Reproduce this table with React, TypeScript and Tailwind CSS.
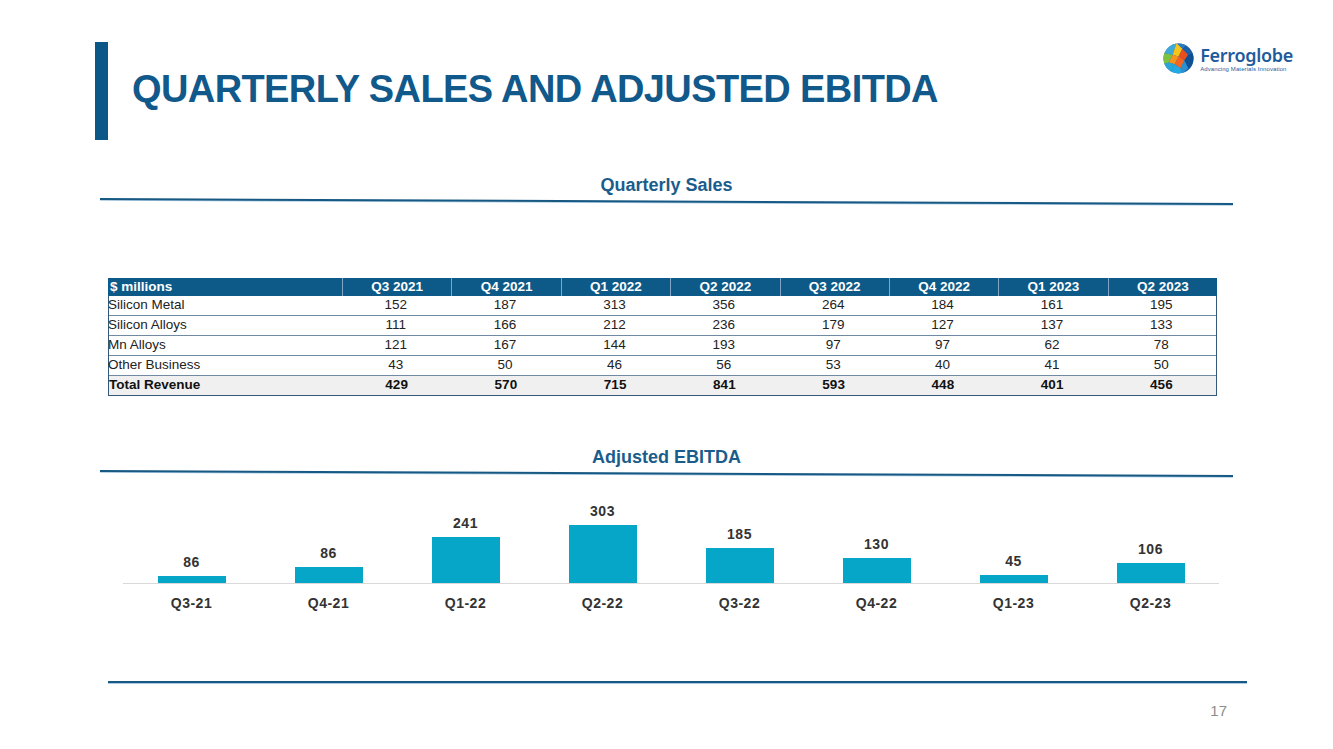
import React from "react";

const quarters = ["Q3 2021", "Q4 2021", "Q1 2022", "Q2 2022", "Q3 2022", "Q4 2022", "Q1 2023", "Q2 2023"];

const rows = [
  { label: "Silicon Metal", values: [152, 187, 313, 356, 264, 184, 161, 195] },
  { label: "Silicon Alloys", values: [111, 166, 212, 236, 179, 127, 137, 133] },
  { label: "Mn Alloys", values: [121, 167, 144, 193, 97, 97, 62, 78] },
  { label: "Other Business", values: [43, 50, 46, 56, 53, 40, 41, 50] },
];

const totals = [429, 570, 715, 841, 593, 448, 401, 456];

// bar heights measured off the slide, not scaled from the values
const ebitda = [
  { q: "Q3-21", v: 86, h: 7 },
  { q: "Q4-21", v: 86, h: 16 },
  { q: "Q1-22", v: 241, h: 46 },
  { q: "Q2-22", v: 303, h: 58 },
  { q: "Q3-22", v: 185, h: 35 },
  { q: "Q4-22", v: 130, h: 25 },
  { q: "Q1-23", v: 45, h: 8 },
  { q: "Q2-23", v: 106, h: 20 },
];

function Logo() {
  return (
    <div className="flex items-center gap-[6px]">
      <svg width="31" height="31" viewBox="0 0 32 32">
        <defs>
          <clipPath id="globe">
            <circle cx="16" cy="16" r="15.5" />
          </clipPath>
        </defs>
        <g clipPath="url(#globe)">
          <rect x="0" y="0" width="32" height="32" fill="#1f6fb5" />
          <polygon points="0,0 14,0 10,12 0,10" fill="#3fa9d8" />
          <polygon points="0,10 10,12 6,20 0,22" fill="#7cc142" />
          <polygon points="10,12 14,0 20,6 16,14" fill="#f5c518" />
          <polygon points="6,20 10,12 16,14 12,22" fill="#f7941d" />
          <polygon points="16,14 20,6 26,12 22,18" fill="#e94e1b" />
          <polygon points="12,22 16,14 22,18 18,26" fill="#f26522" />
          <polygon points="0,22 6,20 12,22 8,32 0,32" fill="#2aa6d6" />
          <polygon points="8,32 12,22 18,26 20,32" fill="#25a9e0" />
          <polygon points="20,6 26,0 32,0 32,10 26,12" fill="#1b5fa8" />
          <polygon points="22,18 26,12 32,10 32,24 26,26" fill="#0f4f94" />
          <polygon points="18,26 22,18 26,26 20,32" fill="#2d8fd0" />
          <polygon points="26,26 32,24 32,32 20,32" fill="#155ca0" />
          <polygon points="14,0 26,0 20,6" fill="#2a7cc2" />
        </g>
      </svg>
      <div className="flex flex-col">
        <span className="text-[18px] leading-[20px] font-semibold text-[#1f5b9c] font-['Noto_Sans',sans-serif] tracking-[-0.3px]">
          Ferroglobe
        </span>
        <span className="text-[6px] leading-[8px] text-[#1f5b9c] font-['Liberation_Sans',sans-serif] tracking-[0.1px]">
          Advancing Materials Innovation
        </span>
      </div>
    </div>
  );
}

function SlantRule({ top, bottom }: { top: number; bottom: number }) {
  return (
    <svg width="1333" height="10" viewBox="0 0 1333 10" className="block">
      <line x1="100" y1={top + 1} x2="1233" y2={bottom + 1} stroke="#a9cbe3" strokeWidth="1.5" />
      <line x1="100" y1={top} x2="1233" y2={bottom} stroke="#175983" strokeWidth="2" />
    </svg>
  );
}

export default function App() {
  return (
    <div className="w-[1333px] h-[749px] bg-white overflow-hidden font-['Liberation_Sans',sans-serif] relative">
      {/* Header */}
      <div className="flex justify-between pt-[42px] pl-[95px] pr-[40px]">
        <div className="flex items-center">
          <div className="w-[13px] h-[98px] bg-[#0b5788]" />
          <h1 className="ml-[24px] text-[38px] leading-[40px] font-bold text-[#11598b] tracking-[-0.6px] mt-[-4px]">
            QUARTERLY SALES AND ADJUSTED EBITDA
          </h1>
        </div>
        <div className="mt-[1px]">
          <Logo />
        </div>
      </div>

      {/* Quarterly Sales */}
      <div className="mt-[34px] text-center text-[18px] leading-[22px] font-bold text-[#1a5d8c]">Quarterly Sales</div>
      <div className="mt-[1px]">
        <SlantRule top={2} bottom={7} />
      </div>

      <div className="ml-[108px] w-[1109px] mt-[71px] text-[13.5px] font-['Liberation_Sans',sans-serif]">
        <div className="flex h-[18px] bg-[#0d5a88] text-white font-bold items-center">
          <div className="w-[234px] pl-[2px]">$ millions</div>
          {quarters.map((q) => (
            <div key={q} className="flex-1 text-center border-l border-[#7fa6c4] h-full flex items-center justify-center">
              {q}
            </div>
          ))}
        </div>
        <div className="border-l border-r border-[#34597a]">
          {rows.map((r) => (
            <div key={r.label} className="flex h-[20px] items-center border-b border-[#6f8aa2] text-[#222]">
              <div className="w-[233px] -ml-[1px]">{r.label}</div>
              {r.values.map((v, i) => (
                <div key={i} className="flex-1 text-center">
                  {v}
                </div>
              ))}
            </div>
          ))}
          <div className="flex h-[20px] items-center bg-[#f0f0f0] border-b-[1.5px] border-[#34597a] font-bold text-[#111]">
            <div className="w-[233px]">Total Revenue</div>
            {totals.map((v, i) => (
              <div key={i} className="flex-1 text-center">
                {v}
              </div>
            ))}
          </div>
        </div>
      </div>

      {/* Adjusted EBITDA */}
      <div className="mt-[50px] text-center text-[18px] leading-[22px] font-bold text-[#1a5d8c]">Adjusted EBITDA</div>
      <div className="mt-[1px]">
        <SlantRule top={2} bottom={7} />
      </div>

      <div className="ml-[123px] w-[1096px] mt-[5px]">
        <div className="flex h-[100px] border-b border-[#d9d9d9]">
          {ebitda.map((d) => (
            <div key={d.q} className="flex-1 flex flex-col items-center justify-end">
              <div className="text-[14px] leading-[16px] font-bold text-[#333] tracking-[0.5px] mb-[6px]">{d.v}</div>
              <div className="w-[68px] bg-[#05a6c8]" style={{ height: d.h }} />
            </div>
          ))}
        </div>
        <div className="flex mt-[11px]">
          {ebitda.map((d) => (
            <div key={d.q} className="flex-1 text-center text-[14px] leading-[16px] font-bold text-[#333] tracking-[0.5px]">
              {d.q}
            </div>
          ))}
        </div>
      </div>

      {/* Footer */}
      <div className="ml-[108px] w-[1139px] h-[2px] bg-[#175983] mt-[70px] shadow-[0_1px_0_#a9cbe3]" />
      <div className="w-[1227px] text-right mt-[19px] text-[15px] leading-[18px] text-[#8c8c8c]">17</div>
    </div>
  );
}
